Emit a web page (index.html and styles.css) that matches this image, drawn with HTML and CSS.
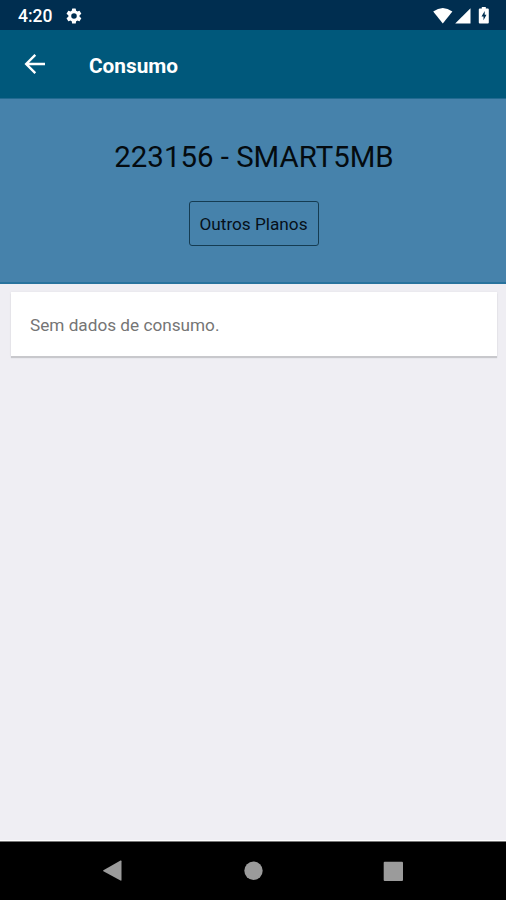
FILE: index.html
```html
<!DOCTYPE html>
<html lang="pt">
<head>
<meta charset="utf-8">
<title>Consumo</title>
<link rel="stylesheet" href="styles.css">
</head>
<body>
<div class="screen">
  <div class="status">
    <span class="time">4:20</span>
    <svg class="gear" width="18" height="18" viewBox="0 0 24 24"><path fill="#fff" fill-rule="evenodd" d="M19.4 13a7.500 7.500 0 0 0 0-2l2.100-1.600a.5.5 0 0 0 .1-.7l-2-3.400a.5.5 0 0 0-.6-.2l-2.500 1a7.300 7.300 0 0 0-1.700-1l-.4-2.600a.5.5 0 0 0-.5-.5h-4a.5.5 0 0 0-.5.5L9 5.100a7.700 7.700 0 0 0-1.700 1l-2.500-1a.5.5 0 0 0-.6.2l-2 3.400a.5.5 0 0 0 .1.700L4.500 11a7.500 7.500 0 0 0 0 2l-2.200 1.600a.5.5 0 0 0-.1.700l2 3.400c.1.200.4.300.6.200l2.500-1a7.300 7.300 0 0 0 1.700 1l.4 2.600c0 .3.200.5.500.5h4c.3 0 .5-.2.500-.5l.4-2.600a7.700 7.700 0 0 0 1.700-1l2.500 1c.2.100.5 0 .6-.2l2-3.400a.5.5 0 0 0-.1-.7zM12 15.700a3.700 3.700 0 1 1 0-7.400 3.700 3.700 0 0 1 0 7.400z"/></svg>
    <svg class="signals" width="60" height="20" viewBox="0 0 60 20"><g fill="#fff"><path d="M.2 5.600Q9.800-1.600 19.400 5.600L9.800 17.400z"/><path d="M22.200 17.500 37.500 2.200V17.500z"/><path d="M46.800 2.500h2V1h4v1.500h2q1 0 1 1v13q0 1-1 1h-8q-1 0-1-1v-13q0-1 1-1z"/></g><path fill="#002e50" d="m51.700 5-3.200 5.400h2v3.800l3-5.500h-1.800z"/></svg>
  </div>
  <header class="bar">
    <svg width="22" height="22" viewBox="0 0 22 22"><path d="M21 11H2.500M11.300 1.900 2.200 11l9.100 9.100" fill="none" stroke="#fff" stroke-width="2.400"/></svg>
    <h1>Consumo</h1>
  </header>
  <section class="plan">
    <h2>223156 - SMART5MB</h2>
    <button>Outros Planos</button>
  </section>
  <main><div class="card">Sem dados de consumo.</div></main>
  <nav>
    <svg width="506" height="58" viewBox="0 0 506 58"><g fill="#9b9b9b"><path d="M103.400 28.200 120.500 18.600q1-.4 1 .6V38q0 1-1 .6L103.400 29.200q-.7-.5 0-1z"/><circle cx="253.500" cy="28.700" r="9.200"/><rect x="383.700" y="19.700" width="19.300" height="19.200" rx="1"/></g></svg>
  </nav>
</div>
</body>
</html>
```

FILE: styles.css
```css
* { box-sizing: border-box; }
body { margin: 0; font-family: Roboto, sans-serif; }
.screen { width: 506px; height: 900px; display: flex; flex-direction: column; background: #efeef3; overflow: hidden; }
.status { height: 30px; flex: none; background: #002e50; color: #fff; display: flex; align-items: center; padding: 2px 15px 0 18px; }
.time { width: 47px; font-size: 17.500px; font-weight: 500; line-height: 28px; }
.signals { margin-left: auto; margin-right: -2px; }
.bar { height: 69px; flex: none; background: #00587b; border-bottom: 1px solid #226a91; color: #fff; display: flex; align-items: center; padding: 0 0 0 24px; }
h1 { margin: 3px 0 0 43px; font-size: 20.800px; font-weight: 700; line-height: 24px; }
.plan { height: 185px; flex: none; background: #4682ab; border-bottom: 2px solid #29739d; display: flex; flex-direction: column; align-items: center; padding-top: 40px; }
h2 { margin: 0 0 0 2px; font-size: 29.400px; font-weight: 400; line-height: 36px; color: #040b10; white-space: nowrap; }
button { margin-top: 26px; margin-left: 1px; width: 130px; height: 45px; padding: 1px 0 0; border: 1.500px solid #153c52; border-radius: 3px; background: none; color: #061019; font: 400 17.200px Roboto, sans-serif; white-space: nowrap; }
main { flex: 1; padding: 8px 9px 0 11px; border-bottom: 1px solid #fff; }
.card { height: 64px; background: #fff; box-shadow: 0 2px 1px #c8c8cc, 0 0 2px #e2e2e6; padding: 1px 19px 0; font-size: 17.200px; line-height: 65px; color: #757575; }
nav { height: 59px; flex: none; background: #000; border-top: 1px solid #777; }
nav svg { display: block; }
```
